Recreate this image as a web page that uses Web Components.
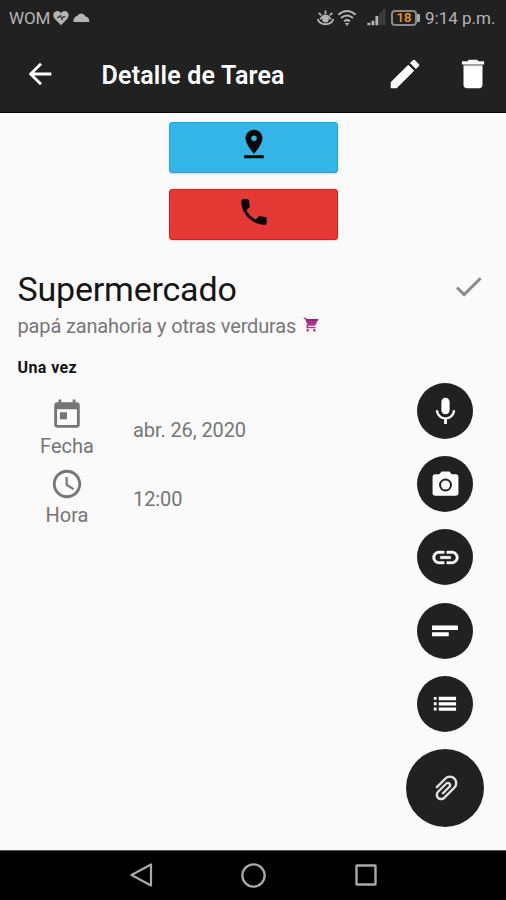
<!DOCTYPE html>
<html lang="es">
<head>
<meta charset="utf-8">
<title>Detalle de Tarea</title>
<style>
html,body{margin:0;height:100%;overflow:hidden}
body{font-family:Roboto,"Liberation Sans",sans-serif;background:#fafafa}
</style>
</head>
<body>
<task-screen></task-screen>
<script>
const icons = {
  back:'<path d="M20 11H7.83l5.59-5.59L12 4l-8 8 8 8 1.41-1.41L7.83 13H20v-2z"/>',
  edit:'<path d="M3 17.25V21h3.75L17.81 9.94l-3.75-3.75L3 17.25zM20.71 7.04a1 1 0 0 0 0-1.41l-2.34-2.34a1 1 0 0 0-1.41 0l-1.83 1.83 3.75 3.75 1.83-1.83z"/>',
  trash:'<path d="M6 19c0 1.1.9 2 2 2h8c1.1 0 2-.9 2-2V7H6v12zM19 4h-3.5l-1-1h-5l-1 1H5v2h14V4z"/><path fill="#aaa" d="M6 6h12v1H6z"/>',
  pin:'<path d="M18 8c0-3.310-2.690-6-6-6S6 4.690 6 8c0 4.500 6 11 6 11s6-6.500 6-11zm-8 0c0-1.100.9-2 2-2s2 .9 2 2-.89 2-2 2c-1.100 0-2-.9-2-2zM5 20v2h14v-2H5z"/>',
  phone:'<path d="M6.620 10.790c1.440 2.830 3.760 5.140 6.590 6.590l2.200-2.200c.27-.27.67-.36 1.020-.24 1.120.37 2.330.57 3.570.57.55 0 1 .45 1 1V20c0 .55-.45 1-1 1-9.390 0-17-7.610-17-17 0-.55.45-1 1-1h3.500c.55 0 1 .45 1 1 0 1.250.2 2.450.57 3.570.11.35.03.74-.25 1.020l-2.200 2.200z"/>',
  check:'<path d="M9 16.170L4.830 12l-1.420 1.410L9 19 21 7l-1.410-1.410z"/>',
  cart:'<path fill="#b0308f" d="M7 18c-1.100 0-1.990.9-1.990 2S5.900 22 7 22s2-.9 2-2-.9-2-2-2zM1 1v2h2l3.600 8.590-1.350 1.450C4.520 15.370 5.480 17 7 17h12v-2H7.420l1.130-2h8.450c.75 0 1.410-.41 1.750-1.030L23 3H5.210l-.94-2H1zm16 17c-1.100 0-1.990.9-1.990 2s.89 2 1.990 2 2-.9 2-2-.9-2-2-2z"/><path fill="#8f2679" d="M5 3h18l-1 3H6z"/>',
  today:'<path d="M19 3h-1V1h-2v2H8V1H6v2H5c-1.110 0-1.990.9-1.990 2L3 19c0 1.100.89 2 2 2h14c1.100 0 2-.9 2-2V5c0-1.100-.9-2-2-2zm0 16H5V8h14v11zM7 10h5v5H7z"/>',
  clock:'<path d="M11.990 2C6.470 2 2 6.480 2 12s4.470 10 9.990 10C17.520 22 22 17.520 22 12S17.520 2 11.990 2zM12 20c-4.420 0-8-3.580-8-8s3.580-8 8-8 8 3.580 8 8-3.580 8-8 8zm.5-13H11v6l5.250 3.150.75-1.230-4.500-2.670z"/>',
  mic:'<path d="M12 14c1.660 0 2.990-1.340 2.990-3L15 5c0-1.660-1.340-3-3-3S9 3.340 9 5v6c0 1.660 1.340 3 3 3zm5.300-3c0 3-2.540 5.100-5.300 5.100S6.700 14 6.700 11H5c0 3.410 2.720 6.230 6 6.720V21h2v-3.280c3.280-.48 6-3.300 6-6.720h-1.700z"/>',
  camera:'<path fill-rule="evenodd" d="M9 2L7.170 4H4a2 2 0 0 0-2 2v13c0 1 .9 1.700 2 1.700h16c1.100 0 2-.7 2-1.700V6a2 2 0 0 0-2-2h-3.170L15 2H9zm3 15.400a5 5 0 1 1 0-10 5 5 0 0 1 0 10z"/><circle cx="12" cy="12.400" r="3.500"/>',
  link:'<path d="M3.900 12c0-1.710 1.390-3.100 3.100-3.100h4V7H7c-2.760 0-5 2.240-5 5s2.240 5 5 5h4v-1.900H7c-1.710 0-3.100-1.390-3.100-3.100zM8 13h8v-2H8v2zm9-6h-4v1.900h4c1.710 0 3.100 1.390 3.100 3.100s-1.390 3.100-3.100 3.100h-4V17h4c2.760 0 5-2.240 5-5s-2.240-5-5-5z" stroke="currentColor" stroke-width=".3"/>',
  notes:'<path d="M2.300 7.900h19.400v3.300H2.300zM2.300 13h12.500v2.900H2.300z"/>',
  list:'<path d="M3.600 6.700h2.100v2.200H3.600zM3.600 10.700h2.100v2.200H3.600zM3.600 14.700h2.100v2.200H3.600zM7.300 6.600h13v2.500h-13zM7.300 10.600h13v2.500h-13zM7.300 14.600h13v2.500h-13z"/>',
  clip:'<path transform="rotate(135 12 12) translate(0 -.5)" d="M2 12.500C2 9.460 4.460 7 7.500 7H18c2.210 0 4 1.790 4 4s-1.790 4-4 4H9.500C8.120 15 7 13.880 7 12.500S8.120 10 9.500 10H17v1.700H9.410c-.75 0-.75 1.600 0 1.600H18c1.100 0 2.300-1.200 2.300-2.300s-1.200-2.300-2.300-2.300H7.500C5.570 8.700 3.700 10.570 3.700 12.500S5.570 16.300 7.500 16.300H17V18H7.500C4.460 18 2 15.540 2 12.500z"/>',
  heart:'<path d="M12 23L2.500 13C-2 7 2 1.500 6.500 1.500c2.500 0 4.500 1.500 5.500 3 1-1.500 3-3 5.500-3C22 1.500 26 7 21.500 13z"/><path d="M6 11h3l2-3 2.500 6 2-4h3" fill="none" stroke="#333" stroke-width="1.700"/>',
  cloud:'<path d="M18.500 10.500A7.200 7.200 0 0 0 5.500 9.300C1.500 10-1 14-1 19h25.500c0-5-2-8-6-8.500z"/>',
  eye:'<g fill="none" stroke="currentColor" stroke-width="2.600"><path d="M1 14Q3 21 12 21.500Q21 21 23 14M4.500 14.500Q12 3.500 19.500 14.500"/><path d="M12 7V2M6 9L2.500 5.500M18 9l3.500-3.500"/></g><circle cx="12" cy="14.500" r="4.600"/>',
  wifi:'<g fill="none" stroke="currentColor" stroke-width="2.700"><path d="M.5 7.500Q12-2 23.500 7.500M4 12q8-6.500 16 0M8 16.300q4-3 8 0"/></g><path d="M9 18.500h6L12 22.500z"/>',
  signal:'<path d="M-1 19.500h4.500V23H-1zM5 16.500h4v6.500H5zM10.500 10h4v13h-4z"/><path opacity=".22" d="M16 5h3.500v18H16zM20.500 0h4v23h-4z"/>',
  navback:'<path fill="none" stroke="currentColor" stroke-width="2.200" stroke-linejoin="round" d="M22 1.500v21L2.500 12z"/>',
  home:'<circle cx="12" cy="12" r="10.700" fill="none" stroke="currentColor" stroke-width="2.200"/>',
  recent:'<rect x="2.500" y="2.500" width="19" height="19" rx=".5" fill="none" stroke="currentColor" stroke-width="2.400"/>'
};

const define = (name, html) => {
  const template = document.createElement('template');
  template.innerHTML = html;
  customElements.define(name, class extends HTMLElement {
    constructor() {
      super();
      this.attachShadow({mode:'open'}).append(template.content.cloneNode(true));
    }
  });
};

customElements.define('ui-icon', class extends HTMLElement {
  connectedCallback() {
    if (this.shadowRoot) return;
    const size = this.getAttribute('size') || 24;
    this.attachShadow({mode:'open'}).innerHTML =
      `<style>:host{display:block;flex:none;width:${size}px;height:${size}px}svg{display:block;overflow:visible}</style>
       <svg width="${size}" height="${size}" viewBox="0 0 24 24" fill="currentColor">${icons[this.getAttribute('name')]}</svg>`;
  }
});

define('status-bar', `<style>
:host{display:flex;align-items:center;height:37px;box-sizing:border-box;padding:0 11px 2px 9px;color:#b4b4b4;font-size:17px;line-height:20px}
.carrier{letter-spacing:-.2px;width:43.500px}
.cloud{margin-left:5px}
.space{flex:1}
.sig{margin-left:12px}
.battery{display:flex;align-items:center;margin:0 5px 0 6px}
.cell{box-sizing:border-box;width:26px;height:16px;border:2px solid #8b8b8b;border-radius:4px;color:#f39a1d;font-size:13px;font-weight:500;line-height:12px;text-align:center}
.tip{width:3px;height:8px;background:#aaa;border-radius:0 1px 1px 0}
.time{width:70px;white-space:nowrap}
</style>
<span class="carrier">WOM</span><ui-icon name="heart" size="16"></ui-icon><ui-icon class="cloud" name="cloud" size="15"></ui-icon>
<span class="space"></span>
<ui-icon name="eye" size="17"></ui-icon><ui-icon style="margin-left:4px" name="wifi" size="18"></ui-icon><ui-icon class="sig" name="signal" size="17"></ui-icon>
<span class="battery"><span class="cell">18</span><span class="tip"></span></span>
<span class="time">9:14 p.m.</span>`);

define('app-toolbar', `<style>
:host{display:flex;align-items:center;height:76px;box-sizing:border-box;padding:0 14px 2px 23px;color:#fff;border-bottom:1px solid #080808}
h1{margin:0 0 0 44.500px;flex:1;font-size:25px;font-weight:600;letter-spacing:.2px;line-height:30px;white-space:nowrap;padding-top:4px}
.del{margin-left:30px}
</style>
<ui-icon name="back" size="34"></ui-icon><h1><slot></slot></h1><ui-icon name="edit" size="38"></ui-icon><ui-icon class="del" name="trash" size="38"></ui-icon>`);

define('action-button', `<style>
:host{display:flex;justify-content:center;box-sizing:border-box;width:169px;height:51px;padding-top:4.500px;border-radius:3px;color:#080808;background:var(--fill);border:1px solid var(--edge);box-shadow:0 1px 2px #0002}
</style><slot></slot>`);

define('round-button', `<style>
:host{display:flex;align-items:center;justify-content:center;flex:none;width:56px;height:56px;border-radius:50%;background:#212121;color:#fff}
:host([large]){width:78px;height:78px;color:#e0e0e0}
</style><slot></slot>`);

define('info-row', `<style>
:host{display:grid;grid-template-columns:98px 1fr;align-items:center;height:69px;color:#757575;font-size:20px;line-height:24px}
.label{display:flex;flex-direction:column;align-items:center}
.value{padding:1px 0 0 17px;white-space:nowrap;letter-spacing:-.1px}
.label span{margin-top:2px}
.label{padding-bottom:2px}
</style><div class="label"><slot name="icon"></slot><span><slot name="label"></slot></span></div><div class="value"><slot></slot></div>`);

define('nav-bar', `<style>
:host{display:flex;align-items:center;height:50px;box-sizing:border-box;border-top:1px solid #555;background:#000;color:#a9a9a9;padding:0 128px 1px 129px;justify-content:space-between}
</style><ui-icon name="navback" size="24"></ui-icon><ui-icon name="home" size="25"></ui-icon><ui-icon name="recent" size="24"></ui-icon>`);

define('task-screen', `<style>
:host{display:flex;flex-direction:column;width:506px;height:900px;background:#fafafa}
header{background:#212121}
.actions{display:flex;flex-direction:column;align-items:center;gap:16.500px;padding:8.500px 0 0 1px}
main{flex:1;min-height:0}
.head{display:flex;align-items:center;justify-content:space-between;height:40px;padding:0 20.500px 0 17.500px;margin-top:29px}
h2{margin:0;font-size:34px;font-weight:400;letter-spacing:-.2px;line-height:40px;color:#151515;white-space:nowrap}
.check{color:#8b8b8b;margin-top:-6px}
.desc{display:flex;align-items:center;gap:7px;margin:5px 0 0 17.500px;color:#777;font-size:20px;letter-spacing:-.15px;line-height:24px;white-space:nowrap}
.desc ui-icon{margin-top:-2px}
.body{display:flex;justify-content:space-between;padding:0 22px 0 18px}
.kind{margin:20px 0 0;font-size:16px;letter-spacing:.4px;font-weight:700;line-height:20px;color:#111;margin-left:-.5px}
.rows{margin-top:16.500px}
.fabs{display:flex;flex-direction:column;align-items:center;gap:17.200px;padding-top:45px}
</style>
<header><status-bar></status-bar><app-toolbar>Detalle de Tarea</app-toolbar></header>
<main>
<div class="actions">
<action-button style="--fill:#34b5e8;--edge:#18a7dd"><ui-icon name="pin" size="34"></ui-icon></action-button>
<action-button style="--fill:#e53935;--edge:#dc1d1f"><ui-icon name="phone" size="34"></ui-icon></action-button>
</div>
<div class="head"><h2>Supermercado</h2><ui-icon class="check" name="check" size="35"></ui-icon></div>
<div class="desc"><span class="dt">papá zanahoria y otras verduras</span><ui-icon name="cart" size="16"></ui-icon></div>
<div class="body">
<div><p class="kind">Una vez</p>
<div class="rows">
<info-row><ui-icon slot="icon" name="today" size="34"></ui-icon><span slot="label">Fecha</span>abr. 26, 2020</info-row>
<info-row><ui-icon slot="icon" name="clock" size="34"></ui-icon><span slot="label">Hora</span>12:00</info-row>
</div></div>
<div class="fabs">
<round-button><ui-icon name="mic" size="33"></ui-icon></round-button>
<round-button><ui-icon name="camera" size="31"></ui-icon></round-button>
<round-button><ui-icon name="link" size="31"></ui-icon></round-button>
<round-button><ui-icon name="notes" size="32"></ui-icon></round-button>
<round-button><ui-icon name="list" size="32"></ui-icon></round-button>
<round-button large><ui-icon name="clip" size="33"></ui-icon></round-button>
</div></div>
</main>
<nav-bar></nav-bar>`);
</script>
</body>
</html>
